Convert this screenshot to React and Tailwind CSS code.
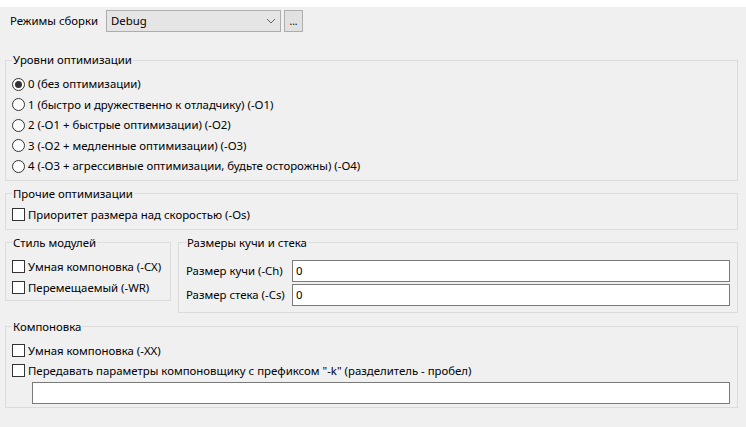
import React from "react";

const font = { fontFamily: '"Noto Sans", "Open Sans", sans-serif' };

function Radio({ checked, label }) {
  return (
    <div className="flex h-[20.5px] items-center">
      <span className="relative flex h-[13px] w-[13px] shrink-0 items-center justify-center rounded-full border border-[#333] bg-white">
        {checked && <span className="h-[7px] w-[7px] rounded-full bg-[#333]" />}
      </span>
      <span className="ml-[3px] whitespace-nowrap">{label}</span>
    </div>
  );
}

function Check({ label, h = "h-[20px]" }) {
  return (
    <div className={`flex ${h} items-center`}>
      <span className="h-[13px] w-[13px] shrink-0 border border-[#333] bg-white" />
      <span className="ml-[3px] whitespace-nowrap">{label}</span>
    </div>
  );
}

function Group({ title, className = "", children }) {
  return (
    <fieldset className={`min-w-0 border border-[#dcdcdc] px-[6px] ${className}`}>
      <legend className="px-[1px] text-[11.4px] leading-[16px]">{title}</legend>
      {children}
    </fieldset>
  );
}

export default function App() {
  return (
    <div
      className="h-[427px] w-[746px] overflow-hidden bg-[#f0f0f0] text-[11.4px] leading-[16px] text-black"
      style={font}
    >
      <div className="h-[7px] bg-white" />
      <div className="mt-[3px] flex h-[22px] items-center">
        <span className="ml-[10px] w-[96px] whitespace-nowrap">Режимы сборки</span>
        <div className="flex h-[22px] w-[175px] items-center justify-between border border-[#adadad] bg-[#e5e5e5] pl-[4px] pr-[4px]">
          <span>Debug</span>
          <svg width="10" height="6" viewBox="0 0 10 6">
            <path d="M1 1 L5 5 L9 1" fill="none" stroke="#606060" strokeWidth="1" />
          </svg>
        </div>
        <div className="ml-[3px] flex h-[22px] w-[19px] items-center justify-center border border-[#adadad] bg-[#e1e1e1] text-[10px] leading-none">
          ...
        </div>
      </div>

      <div className="ml-[5px] w-[733px]">
        <Group title="Уровни оптимизации" className="mt-[20px] pb-[3px]">
          <div className="pt-[6px]">
            <Radio checked label="0 (без оптимизации)" />
            <Radio label="1 (быстро и дружественно к отладчику) (-O1)" />
            <Radio label="2 (-O1 + быстрые оптимизации) (-O2)" />
            <Radio label="3 (-O2 + медленные оптимизации) (-O3)" />
            <Radio label="4 (-O3 + агрессивные оптимизации, будьте осторожны) (-O4)" />
          </div>
        </Group>

        <Group title="Прочие оптимизации" className="mt-[5px] pb-[4px]">
          <div className="pt-[3px]">
            <Check label="Приоритет размера над скоростью (-Os)" />
          </div>
        </Group>

        <div className="mt-[5px] flex items-start gap-[7px]">
          <Group title="Стиль модулей" className="w-[166px] shrink-0 pb-[2px]">
            <div className="pt-[5.5px]">
              <Check label="Умная компоновка (-CX)" h="h-[21px]" />
              <Check label="Перемещаемый (-WR)" h="h-[21px]" />
            </div>
          </Group>
          <Group title="Размеры кучи и стека" className="w-[560px] shrink-0 px-[7px] pb-[6px]">
            <div className="flex flex-col gap-[2px] pt-[9px]">
              <div className="flex items-center">
                <span className="w-[106px] whitespace-nowrap">Размер кучи (-Ch)</span>
                <div className="flex h-[22px] flex-1 items-center border border-[#7a7a7a] bg-white pl-[3px]">0</div>
              </div>
              <div className="flex items-center">
                <span className="w-[106px] whitespace-nowrap">Размер стека (-Cs)</span>
                <div className="flex h-[22px] flex-1 items-center border border-[#7a7a7a] bg-white pl-[3px]">0</div>
              </div>
            </div>
          </Group>
        </div>

        <Group title="Компоновка" className="mt-[6px] pb-[3px]">
          <div className="pt-[6px]">
            <Check label="Умная компоновка (-XX)" />
            <Check label={'Передавать параметры компоновщику с префиксом "-k" (разделитель - пробел)'} />
            <div className="ml-[20px] mr-[1px] mt-[1px] h-[22px] border border-[#7a7a7a] bg-white" />
          </div>
        </Group>
      </div>
    </div>
  );
}
